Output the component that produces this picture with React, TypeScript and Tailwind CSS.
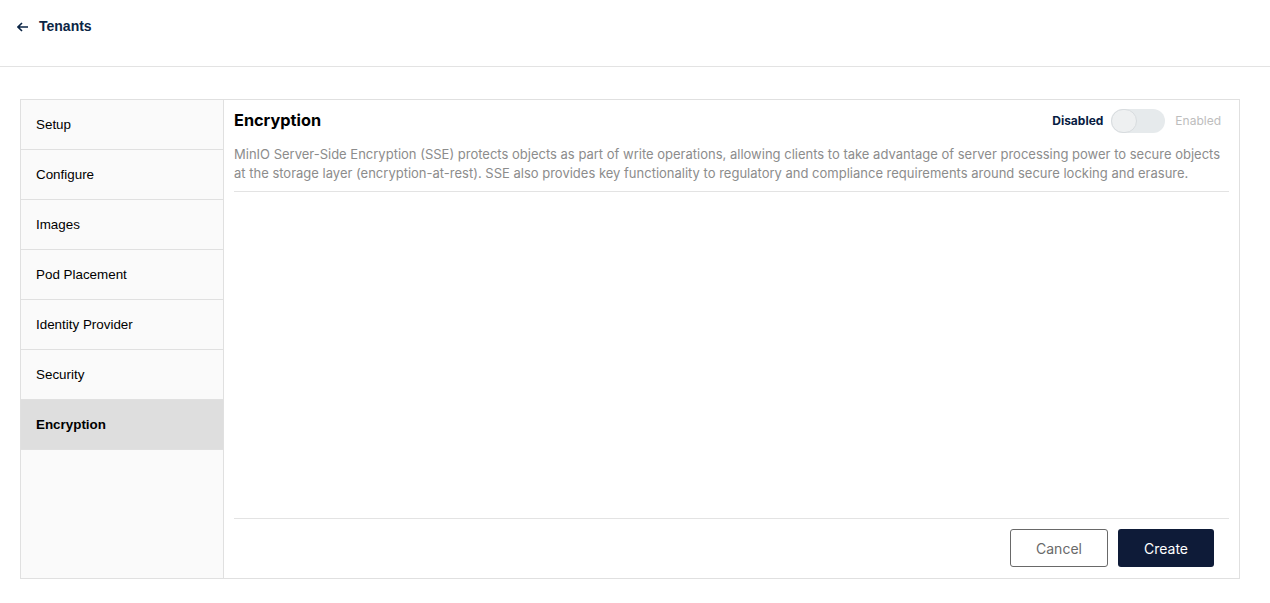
import { useState } from "react";

const steps = [
  "Setup",
  "Configure",
  "Images",
  "Pod Placement",
  "Identity Provider",
  "Security",
  "Encryption",
];

export default function App() {
  const [enabled, setEnabled] = useState(false);
  const active = "Encryption";

  return (
    <div className="w-[1270px] h-[603px] bg-white font-['Inter',sans-serif] overflow-hidden">
      {/* Top bar */}
      <div className="h-[67px] border-b border-[#e3e3e3] flex items-center pl-[17px] pb-[13px]">
        <button className="flex items-center gap-[10px] text-[#0b2545] font-['Liberation_Sans',sans-serif] font-bold text-[14px]">
          <svg width="12" height="10" viewBox="0 0 12 10" fill="none">
            <path d="M11 5H1.5M5 1L1 5l4 4" stroke="#0b2545" strokeWidth="1.6" />
          </svg>
          Tenants
        </button>
      </div>

      {/* Wizard */}
      <div className="ml-[20px] mt-[32px] w-[1220px] h-[480px] border border-[#e0e0e0] flex">
        {/* sidebar */}
        <div className="w-[203px] shrink-0 bg-[#fafafa] border-r border-[#e0e0e0] font-['Liberation_Sans',sans-serif]">
          {steps.map((s) => (
            <div
              key={s}
              className={
                s === active
                  ? "h-[50px] pl-[15px] pt-[2px] flex items-center text-[13.4px] font-bold text-[#000] bg-[#dedede] border-b border-[#e0e0e0]"
                  : "h-[50px] pl-[15px] pt-[2px] flex items-center text-[13.4px] text-[#000] border-b border-[#e0e0e0]"
              }
            >
              {s}
            </div>
          ))}
        </div>

        {/* content */}
        <div className="flex-1 flex flex-col px-[10px] pb-[10px]">
          <div className="flex items-center justify-between h-[40px] pt-[1px]">
            <h2 className="text-[16.3px] font-bold text-black">Encryption</h2>
            <div className="flex items-center gap-[8px] text-[12px] pr-[8px]">
              <span className="font-bold text-[#081c42]">Disabled</span>
              <button
                onClick={() => setEnabled(!enabled)}
                className="relative w-[54px] h-[24px] rounded-full bg-[#e6eaec]"
              >
                <span className="absolute left-0 top-0 w-[26px] h-[24px] rounded-full bg-[#eef0f1] border border-[#d8dcdf]" />
              </button>
              <span className="text-[#bdbdbd] ml-[2px]">Enabled</span>
            </div>
          </div>
          <p className="text-[13px] leading-[19px] text-[#8c8c8c] mt-[5px] pb-[8px] border-b border-[#e3e3e3]">
            MinIO Server-Side Encryption (SSE) protects objects as part of write operations, allowing clients to take advantage of server processing power to secure objects at the storage layer (encryption-at-rest). SSE also provides key functionality to regulatory and compliance requirements around secure locking and erasure.
          </p>
          <div className="flex-1" />
          <div className="border-t border-[#e3e3e3] pt-[10px] pb-[1px] flex justify-end gap-[10px] pr-[15px]">
            <button className="w-[98px] h-[38px] rounded-[3px] border border-[#696969] text-[14px] text-[#696969] bg-white">
              Cancel
            </button>
            <button className="w-[96px] h-[38px] rounded-[3px] bg-[#0e1b38] text-[14px] text-white">
              Create
            </button>
          </div>
        </div>
      </div>
    </div>
  );
}
